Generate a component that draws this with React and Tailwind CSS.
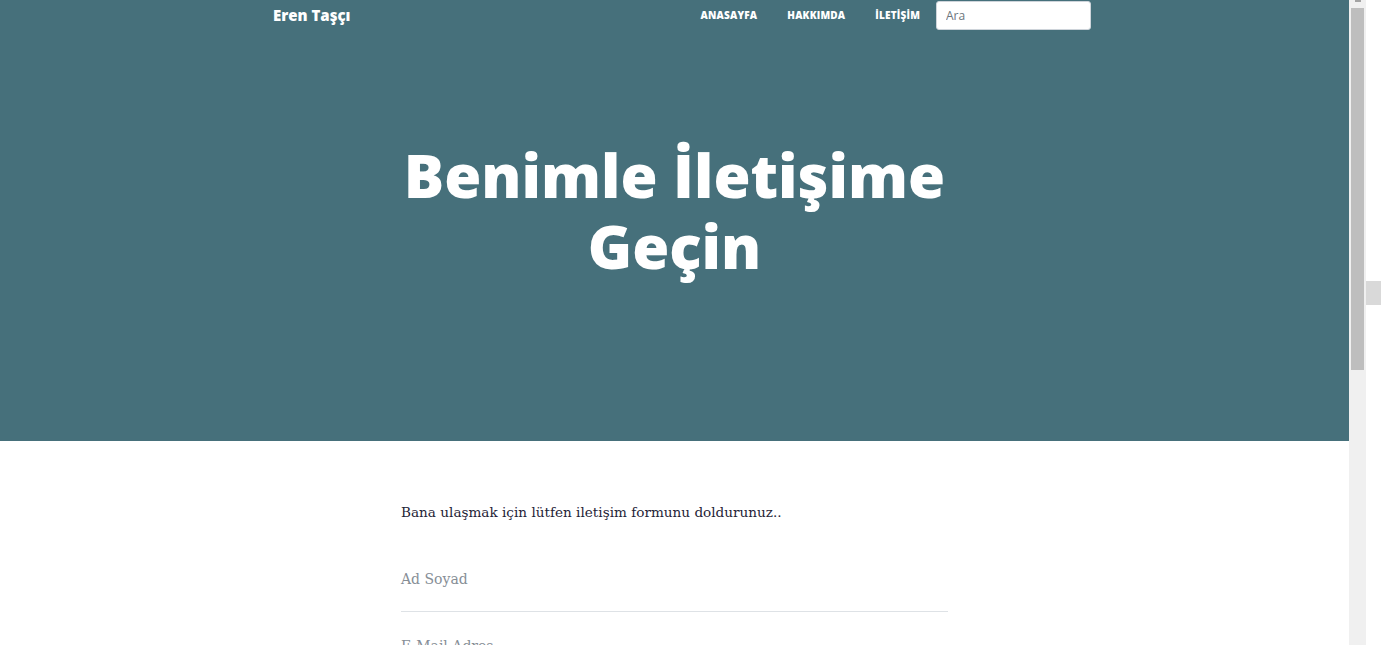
export default function App() {
  const navLinks = ["Anasayfa", "Hakkımda", "İletişim"];

  return (
    <div className="flex h-[645px] w-full overflow-hidden bg-white">
      <div className="flex-1 min-w-0">
        <header className="h-[441px] bg-[#46707b] [font-family:'Open_Sans',sans-serif]">
          <nav className="flex h-[31px] items-center pl-[273px]">
            <a className="text-[15px] font-extrabold text-white">Eren Taşçı</a>
            <div className="ml-auto mr-[258px] flex items-center">
              {navLinks.map((link) => (
                <a
                  key={link}
                  className="px-[15px] text-[10px] font-extrabold uppercase tracking-[0.2px] text-white"
                >
                  {link.toLocaleUpperCase("tr")}
                </a>
              ))}
              <input
                placeholder="Ara"
                className="ml-[1px] h-[29px] w-[155px] rounded-[3px] border border-[#ced4da] bg-white px-[9px] text-[12px] text-[#495057] placeholder:text-[#6c757d] outline-none"
              />
            </div>
          </nav>
          <div className="flex justify-center pt-[109px]">
            <h1 className="w-[580px] text-center text-[60px] font-extrabold leading-[71px] text-white">
              Benimle İletişime Geçin
            </h1>
          </div>
        </header>

        <main className="mx-auto w-[547px] pt-[58px] [font-family:'DejaVu_Serif',serif]">
          <p className="text-[13.6px] leading-[26px] text-[#1f2437]">
            Bana ulaşmak için lütfen iletişim formunu doldurunuz..
          </p>
          <div className="mt-[40px] border-b border-[#dee2e6] pb-[18px]">
            <div className="text-[14px] leading-[28px] text-[#868e96]">Ad Soyad</div>
          </div>
          <div className="pt-[20px]">
            <div className="text-[14px] leading-[28px] text-[#868e96]">E-Mail Adres</div>
          </div>
        </main>
      </div>

      <div className="flex w-[32px] shrink-0">
        <div className="flex w-[17px] flex-col items-center bg-[#f0f0f0]">
          <div className="h-[2px] w-[6px] bg-[#a3a3a3]" />
          <div className="mt-[6px] h-[362px] w-[13px] bg-[#bebebe]" />
        </div>
        <div className="flex w-[15px] flex-col bg-white">
          <div className="mt-[281px] h-[24px] w-[15px] bg-[#d9d9d9]" />
        </div>
      </div>
    </div>
  );
}
